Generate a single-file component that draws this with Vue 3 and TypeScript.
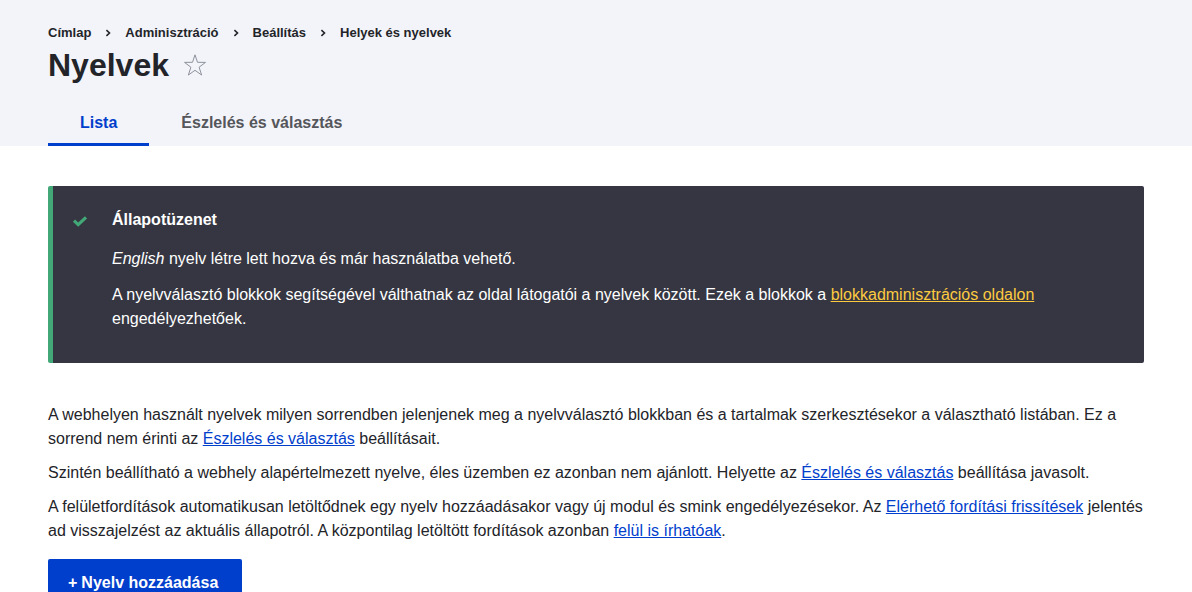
<script setup lang="ts">
interface Crumb {
  label: string
  href: string
}

const crumbs: Crumb[] = [
  { label: 'Címlap', href: '#home' },
  { label: 'Adminisztráció', href: '#admin' },
  { label: 'Beállítás', href: '#config' },
  { label: 'Helyek és nyelvek', href: '#regional' },
]
</script>

<template>
  <div class="page">
    <header class="content-header">
      <nav aria-label="Morzsa">
        <ol class="breadcrumb">
          <li v-for="(crumb, index) in crumbs" :key="crumb.href" class="crumb">
            <svg v-if="index > 0" class="chevron" viewBox="0 0 8 8" aria-hidden="true">
              <path d="M2.4 1.1 5.5 4 2.4 6.9" fill="none" stroke="#232429" stroke-width="1.6" />
            </svg>
            <a :href="crumb.href">{{ crumb.label }}</a>
          </li>
        </ol>
      </nav>
      <div class="title-row">
        <h1>Nyelvek</h1>
        <button type="button" class="star" aria-label="Hozzáadás a gyorshivatkozásokhoz">
          <svg viewBox="0 0 24 24" aria-hidden="true">
            <path
              d="M12 1.8 14.5 9.3 22.5 9.4 16.1 14.2 18.6 22 12 17.3 5.4 22 7.9 14.2 1.5 9.4 9.5 9.3Z"
              fill="none"
              stroke="#8e929c"
              stroke-width="1"
            />
          </svg>
        </button>
      </div>
      <nav class="tabs" aria-label="Elsődleges fülek">
        <a class="tab active" href="#list" aria-current="page">Lista</a>
        <a class="tab" href="#detection">Észlelés és választás</a>
      </nav>
    </header>

    <main>
      <section class="message" role="status" aria-labelledby="status-title">
        <svg class="check" viewBox="0 0 16 16" aria-hidden="true">
          <path d="M2 7.6 6.2 11.6 14 4.4" fill="none" stroke="#42a877" stroke-width="3.2" />
        </svg>
        <div class="message-body">
          <h2 id="status-title">Állapotüzenet</h2>
          <p><em>English</em> nyelv létre lett hozva és már használatba vehető.</p>
          <p>
            A nyelvválasztó blokkok segítségével válthatnak az oldal látogatói a nyelvek között.
            Ezek a blokkok a <a href="#blocks">blokkadminisztrációs oldalon</a> engedélyezhetőek.
          </p>
        </div>
      </section>

      <div class="help">
        <p>
          A webhelyen használt nyelvek milyen sorrendben jelenjenek meg a nyelvválasztó blokkban és
          a tartalmak szerkesztésekor a választható listában. Ez a sorrend nem érinti az
          <a href="#detection">Észlelés és választás</a> beállításait.
        </p>
        <p>
          Szintén beállítható a webhely alapértelmezett nyelve, éles üzemben ez azonban nem
          ajánlott. Helyette az <a href="#detection">Észlelés és választás</a> beállítása javasolt.
        </p>
        <p>
          A felületfordítások automatikusan letöltődnek egy nyelv hozzáadásakor vagy új modul és
          smink engedélyezésekor. Az <a href="#updates">Elérhető fordítási frissítések</a> jelentés
          ad visszajelzést az aktuális állapotról. A központilag letöltött fordítások azonban
          <a href="#translate">felül is írhatóak</a>.
        </p>
      </div>

      <a class="action" href="#add"><span aria-hidden="true">+</span>Nyelv hozzáadása</a>
    </main>
  </div>
</template>

<style>
body {
  margin: 0;
  background: #fff;
}
</style>

<style scoped>
.page {
  color: #232429;
  font-family: "Liberation Sans", Arial, sans-serif;
  font-size: 16px;
  line-height: 24px;
}

.content-header {
  padding: 24px 48px 0;
  background: #f3f4f9;
}

.breadcrumb {
  display: flex;
  flex-wrap: wrap;
  margin: 0;
  padding: 0;
  list-style: none;
  font-size: 13px;
  font-weight: 700;
  line-height: 18px;
}

.crumb {
  display: flex;
  align-items: center;
}

.crumb a {
  color: inherit;
  text-decoration: none;
}

.chevron {
  width: 8px;
  height: 8px;
  margin: 0 13px;
}

.title-row {
  display: flex;
  align-items: center;
  gap: 14px;
  padding: 2px 0 12px;
}

h1 {
  margin: 0;
  font-size: 32px;
  line-height: 42px;
}

.star {
  width: 24px;
  height: 24px;
  padding: 0;
  border: 0;
  background: none;
  cursor: pointer;
}

.star svg {
  display: block;
}

.tabs {
  display: flex;
}

.tab {
  padding: 13px 32px 8px;
  border-bottom: 3px solid transparent;
  color: #55565b;
  font-weight: 700;
  text-decoration: none;
}

.tab.active {
  border-color: #003ecc;
  color: #003ecc;
}

main {
  padding: 40px 48px;
}

.message {
  display: flex;
  gap: 24px;
  padding: 22px 32px 32px 19px;
  border-left: 5px solid #42a877;
  border-radius: 2px;
  background: #353641;
  color: #fff;
}

.check {
  flex: none;
  width: 16px;
  height: 16px;
  margin-top: 5px;
}

h2 {
  margin: 0 0 15px;
  font-size: 16px;
  line-height: 24px;
}

.message p {
  margin: 12px 0 0;
}

.message a {
  color: #fdca40;
}

.help {
  margin-top: 40px;
}

.help p {
  margin: 0 0 10px;
}

.help a {
  color: #003ecc;
}

.action {
  display: inline-flex;
  gap: 4px;
  margin-top: 6px;
  padding: 12px 24px 12px 20px;
  border-radius: 2px;
  background: #003ecc;
  color: #fff;
  font-weight: 700;
  text-decoration: none;
}
</style>
